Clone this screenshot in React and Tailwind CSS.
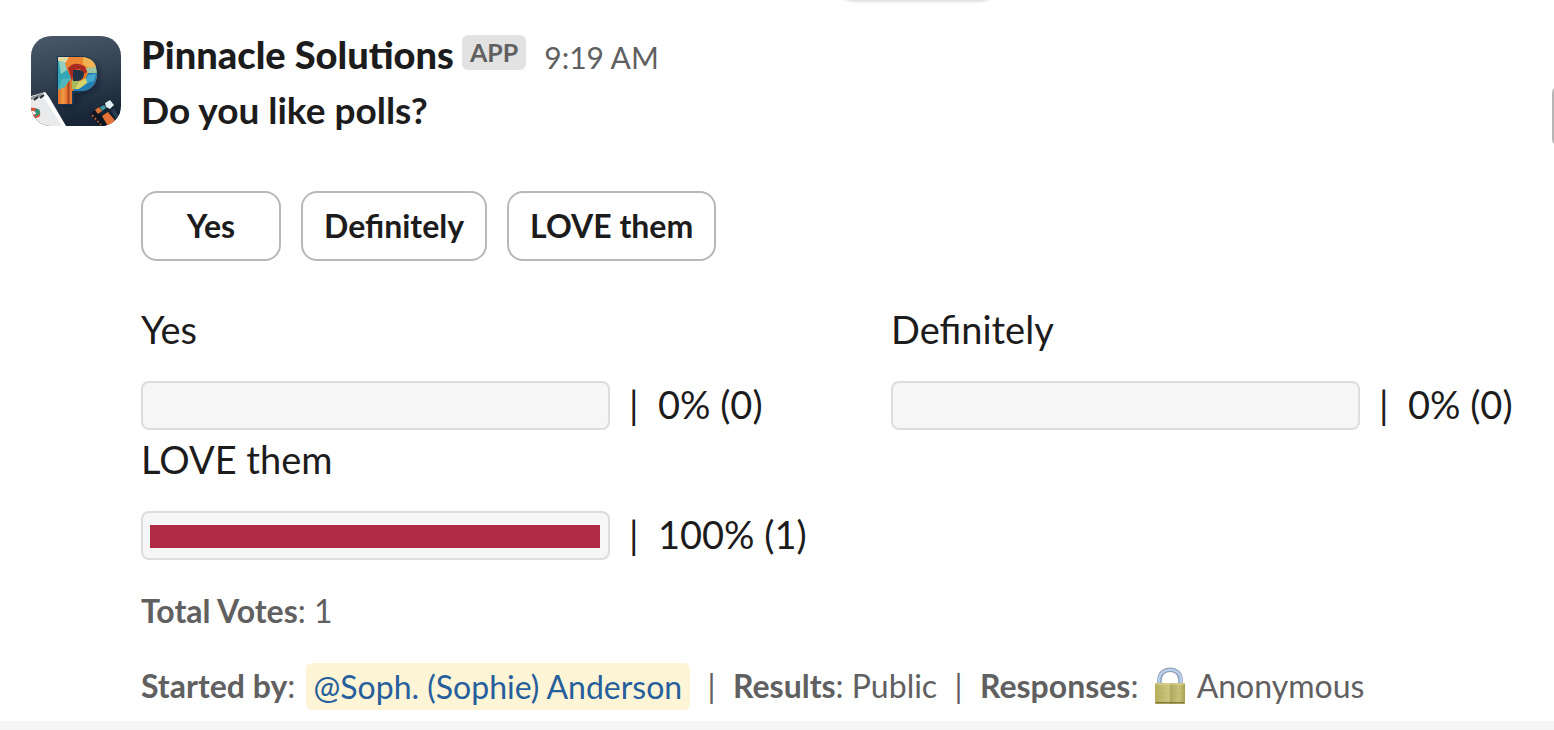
const options = [
  { label: "Yes", percent: 0, votes: 0 },
  { label: "Definitely", percent: 0, votes: 0 },
  { label: "LOVE them", percent: 100, votes: 1 },
];

function Logo() {
  return (
    <svg viewBox="0 0 90 90" className="size-[90px] shrink-0 rounded-[20px]" role="img" aria-label="Pinnacle Solutions">
      <defs>
        <linearGradient id="sky" x1="0" y1="0" x2="0.2" y2="1">
          <stop offset="0" stopColor="#4b5a6b" />
          <stop offset="0.5" stopColor="#334152" />
          <stop offset="1" stopColor="#172537" />
        </linearGradient>
        <linearGradient id="stem">
          <stop offset="0" stopColor="#dc6c28" />
          <stop offset="0.4" stopColor="#f09a45" />
          <stop offset="0.65" stopColor="#e8782f" />
          <stop offset="0.8" stopColor="#a8431f" />
          <stop offset="1" stopColor="#e58a3c" />
        </linearGradient>
        <filter id="soft" x="-10%" y="-10%" width="120%" height="120%">
          <feGaussianBlur stdDeviation="0.6" />
        </filter>
        <filter id="shade" x="-30%" y="-30%" width="160%" height="160%">
          <feGaussianBlur stdDeviation="2" />
        </filter>
      </defs>
      <rect width="90" height="90" fill="url(#sky)" />
      <path d="M28 24H54Q70 26 68 42T51 58L43 71H29Z" fill="#101d2d" opacity=".65" filter="url(#shade)" />
      <g filter="url(#soft)">
        <path d="M26 20H52C62 21 68 29 67 40C66 52 58 57 43 57V69H26Z" fill="#173654" />
        <path d="M27 21H50C60 21 66 29 66 38C66 49 59 55 49 55H41V68H27Z" fill="#e8742c" />
        <path d="M27 45L40 40V68H27Z" fill="url(#stem)" />
        <path d="M27 21H38L35 27L27 25Z" fill="#e2d9a0" />
        <path d="M27 25L33 27L40 42L33 51L27 53Z" fill="#35a6b8" />
        <path d="M28 25L34 26L36 34L30 38Z" fill="#8fd0c0" />
        <path d="M31 43L40 42L34 51L27 54Z" fill="#4fb7bd" />
        <path d="M38 21H51L57 27L50 30L41 28L37 32L34 28Z" fill="#ee8630" />
        <path d="M52 21C60 22 64 26 65 31L58 33L52 28Z" fill="#efb351" />
        <path d="M37 32Q45 24 54 31L56 36L53 38L49 33L43 34L41 45Z" fill="#a92923" />
        <path d="M55 32L65 31L66 38L57 38Z" fill="#9fc3a0" />
        <path d="M66 37C66 49 59 55 49 55H42L46 49L54 44L57 37Z" fill="#2380b6" />
        <path d="M57 39L65 38L63 45L53 48Z" fill="#45a8cf" />
        <path d="M41 44L50 45L47 53H41Z" fill="#a6b95d" />
        <path d="M48 46L55 42L56 47L48 53H44Z" fill="#d6d36a" />
        <path d="M42 34H49Q53 35 53 39Q52 44 47 45H42Z" fill="#203247" />
        <path d="M0 60L14 56L34 91H0Z" fill="#e8eaec" />
        <path d="M14 56L18 61L35 90H31L12 60Z" fill="#ffffff" />
        <path d="M0 61L12 57L11 60L0 64Z" fill="#8c9299" />
        <path d="M3 64L7 61M9 62L13 59" stroke="#20272f" strokeWidth="2" />
        <path d="M0 72Q7 71 9 77T0 82Z" fill="#df4e35" />
        <path d="M4 73Q10 72 9 78L4 81Z" fill="#388e77" />
        <path d="M0 75Q4 74 5 78L0 79Z" fill="#f5f4ee" />
        <path d="M58 78L78 63L91 79V91H70Z" fill="#182231" />
        <path d="M59 78L66 73L79 90H68Z" fill="#101923" />
        <path d="M61 79L70 89" stroke="#a45632" strokeWidth="2" strokeDasharray="2 2" />
        <path d="M71 80L77 76L86 87V90H77Z" fill="#e47335" />
        <path d="M64 74L68 71L71 75L67 78Z" fill="#d77335" />
        <path d="M69 71L73 69L75 72L71 75Z" fill="#409b9e" />
        <path d="M74 67L79 64L83 69L79 73L75 71Z" fill="#dcecef" />
        <path d="M80 75L83 72L89 82L87 86Z" fill="#263b50" />
      </g>
    </svg>
  );
}

function Lock() {
  return (
    <svg viewBox="0 0 32 38" className="h-[38px] w-8 shrink-0" aria-hidden="true">
      <defs>
        <linearGradient id="brass">
          <stop offset="0" stopColor="#b6ae5c" />
          <stop offset=".48" stopColor="#cec783" />
          <stop offset=".5" stopColor="#aea760" />
          <stop offset=".8" stopColor="#c8c27a" />
          <stop offset="1" stopColor="#aaa253" />
        </linearGradient>
      </defs>
      <path d="M5.5 19V12.500C5.500-.5 26.500-.5 26.500 12.500V19" fill="none" stroke="#8998ad" strokeWidth="4.500" />
      <path d="M5.200 18V12.500C5.200-.5 26.800-.5 26.800 12.500V18" fill="none" stroke="#b9d1ee" strokeWidth="2.500" />
      <rect x="1" y="16" width="30" height="21" rx="1" fill="url(#brass)" />
      <path d="M1.500 17H30.500" stroke="#ded79a" />
      <path d="M2 22H30M2 26H30M2 30H30" stroke="#a69f55" strokeWidth=".4" opacity=".4" />
      <path d="M1.500 35.700H30.500" stroke="#857c3d" strokeWidth="1.500" />
    </svg>
  );
}

function Separator() {
  return <span className="px-px">{"  |  "}</span>;
}

function Result({ label, percent, votes }) {
  return (
    <div className="h-[130px]">
      <div className="h-[55px] leading-[55px]">{label}</div>
      <div className="flex items-start whitespace-pre pt-6 leading-[47px]">
        <div
          role="progressbar"
          aria-label={label}
          aria-valuenow={percent}
          className="flex h-[49px] w-[469px] items-end rounded-lg border-2 border-[#dddddd] bg-[#f6f6f6] pr-2 pb-[10px] pl-[7px]"
        >
          <div className="h-[23px] bg-[#af2a45]" style={{ width: `${percent}%` }} />
        </div>
        <span className="ml-[19px]">{`|  ${percent}% (${votes})`}</span>
      </div>
    </div>
  );
}

export default function App() {
  return (
    <div className="relative overflow-hidden bg-white font-['Lato',sans-serif] text-[38px] text-[#1d1c1d]">
      <div className="absolute -top-[69px] left-[822px] h-[70px] w-[190px] rounded-full border border-[#e4e4e4] bg-white shadow" />
      <div className="absolute top-[85px] -right-[18px] h-[62px] w-5 rounded-lg border-2 border-[#b5b5b5] bg-white" />
      <article className="flex gap-5 pt-[27px] pl-[31px]">
        <div className="pt-[9px]">
          <Logo />
        </div>
        <div className="min-w-0 flex-1">
          <header className="flex h-[55px] items-baseline whitespace-nowrap leading-[55px]">
            <h1 className="font-black">Pinnacle Solutions</h1>
            <span className="mt-2 ml-2 self-start rounded-md bg-[#e2e2e2] px-2 text-[25px] leading-[35px] font-bold text-[#616061]">
              APP
            </span>
            <time className="ml-[18px] text-[30px] text-[#616061]">9:19 AM</time>
          </header>
          <p className="text-[37px] leading-[55px] font-bold">Do you like polls?</p>
          <div className="mt-[54px] flex gap-5">
            {options.map((o) => (
              <button
                key={o.label}
                type="button"
                className="h-[70px] min-w-[140px] rounded-2xl border-2 border-[#b8b8b8] bg-white px-[21px] text-[32px] font-bold whitespace-nowrap"
              >
                {o.label}
              </button>
            ))}
          </div>
          <section className="mt-[41px] grid grid-cols-[750fr_663fr] whitespace-nowrap">
            {options.map((o) => (
              <Result key={o.label} {...o} />
            ))}
          </section>
          <footer className="text-[32px] text-[#616061]">
            <p className="mt-6 leading-[50px]">
              <b>Total Votes</b>: 1
            </p>
            <p className="mt-[25px] flex h-[50px] items-center whitespace-pre">
              <span>
                <b>Started by</b>:{" "}
              </span>
              <a href="#sophie" className="ml-0.5 rounded-md bg-[#fef4d6] px-2 leading-[47px] text-[#265f9c]">
                @Soph. (Sophie) Anderson
              </a>
              <Separator />
              <span>
                <b>Results</b>: Public
              </span>
              <Separator />
              <span>
                <b>Responses</b>:{" "}
              </span>
              <span className="ml-[7px] flex items-center gap-[11px]">
                <Lock />
                Anonymous
              </span>
            </p>
          </footer>
        </div>
      </article>
      <div className="mt-[10px] h-[9px] bg-[#f5f5f5]" />
    </div>
  );
}
